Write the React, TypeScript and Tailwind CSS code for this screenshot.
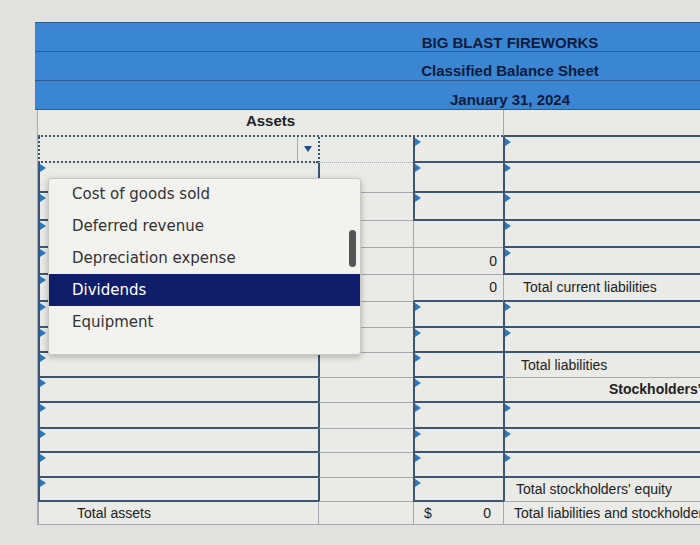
import React from "react";

type CellDef =
  | { t: "i" }
  | { t: "b" }
  | { t: "sel" }
  | { t: "txt"; text: string; cls: string }
  | { t: "zero" }
  | { t: "dollar" };

const I: CellDef = { t: "i" };
const B: CellDef = { t: "b" };
const SEL: CellDef = { t: "sel" };
const ZERO: CellDef = { t: "zero" };
const DOLLAR: CellDef = { t: "dollar" };
const txt = (text: string, cls: string): CellDef => ({ t: "txt", text, cls });

const COLW = ["w-[280px]", "w-[95px]", "w-[90px]", "w-[485px]"];

const ROWH = [
  "h-[26px]",
  "h-[30px]",
  "h-[28px]",
  "h-[27px]",
  "h-[27px]",
  "h-[27px]",
  "h-[26px]",
  "h-[25px]",
  "h-[25px]",
  "h-[25px]",
  "h-[26px]",
  "h-[24px]",
  "h-[25px]",
  "h-[24px]",
  "h-[23px]",
];

const rows: CellDef[][] = [
  [SEL, B, I, I],
  [I, B, I, I],
  [I, B, I, I],
  [I, B, B, I],
  [I, B, ZERO, I],
  [I, B, ZERO, txt("Total current liabilities", "pl-[19px]")],
  [I, B, I, I],
  [I, B, I, I],
  [I, B, I, txt("Total liabilities", "pl-[16px]")],
  [I, B, I, txt("Stockholders' equity", "pl-[104px] font-bold")],
  [I, B, I, I],
  [I, B, I, I],
  [I, B, I, I],
  [I, B, I, txt("Total stockholders' equity", "pl-[11px]")],
  [
    txt("Total assets", "pl-[38px]"),
    B,
    DOLLAR,
    txt("Total liabilities and stockholders' equity", "pl-[10px]"),
  ],
];

function Marker() {
  return (
    <span className="absolute left-0 top-[1px] w-0 h-0 border-y-[4px] border-y-transparent border-l-[6px] border-l-[#2b78c2]" />
  );
}

function Cell({ r, c }: { r: number; c: number }) {
  const cell = rows[r][c];
  const prev = c > 0 ? rows[r][c - 1] : null;
  const below = r + 1 < rows.length ? rows[r + 1][c] : null;
  const isIn = cell.t === "i";
  const isSel = cell.t === "sel";

  let left: string;
  if (isSel) left = "border-l-2 border-l-[#3a5674] border-dotted";
  else if (prev && prev.t === "sel") left = "border-l-2 border-l-[#3a5674] border-dotted";
  else if (isIn || (prev && prev.t === "i")) left = "border-l-2 border-l-[#3a5674]";
  else left = "border-l border-l-[#a4a9ad]";

  let bottom: string;
  if (isSel) bottom = "border-b-2 border-b-[#3a5674]";
  else if (isIn || (below && below.t === "i")) bottom = "border-b-2 border-b-[#3a5674]";
  else bottom = "border-b border-b-[#a4a9ad]";

  return (
    <div
      className={`${COLW[c]} ${left} ${bottom} relative h-full shrink-0 flex items-center overflow-hidden whitespace-nowrap`}
    >
      {isIn && <Marker />}
      {isSel && (
        <div className="flex w-full h-full justify-end">
          <div className="w-[21px] h-full border-l border-l-[#a4a9ad] flex items-center justify-center">
            <span className="w-0 h-0 border-x-[4px] border-x-transparent border-t-[6px] border-t-[#1d4d86]" />
          </div>
        </div>
      )}
      {cell.t === "txt" && <span className={cell.cls}>{cell.text}</span>}
      {cell.t === "zero" && <span className="ml-auto pr-[6px]">0</span>}
      {cell.t === "dollar" && (
        <div className="flex w-full justify-between pl-[10px] pr-[12px]">
          <span>$</span>
          <span>0</span>
        </div>
      )}
    </div>
  );
}

export default function App() {
  const items = [
    "Cost of goods sold",
    "Deferred revenue",
    "Depreciation expense",
    "Dividends",
    "Equipment",
  ];
  return (
    <div
      className="relative w-[700px] h-[545px] overflow-hidden bg-[#e2e2de] text-[#222]"
      style={{ fontFamily: '"Liberation Sans", Arial, sans-serif' }}
    >
      <div className="pt-[22px] pl-[35px]">
        <div className="w-[950px] text-[14px]">
          {/* header */}
          <div className="bg-[#3a86d3] border-t border-[#2a5c92] text-[#0d1b3e] font-bold text-[15px]">
            <div className="h-[29px] flex items-center justify-center pt-[12px] border-b border-[#2a5c92]">
              BIG BLAST FIREWORKS
            </div>
            <div className="h-[29px] flex items-center justify-center pt-[11px] border-b border-[#2a5c92]">
              Classified Balance Sheet
            </div>
            <div className="h-[29px] flex items-center justify-center pt-[10px] border-b border-[#2a5c92]">
              January 31, 2024
            </div>
          </div>
          <div className="bg-[#eaeae6] border-l border-l-[#a4a9ad] ml-[2px]">
            {/* Assets heading row */}
            <div className="h-[27px] flex">
              <div className="w-[465px] shrink-0 flex items-end justify-center pb-[3px] font-bold text-[15px] border-b-2 border-dotted border-b-[#3a5674]">
                Assets
              </div>
              <div className="w-[485px] shrink-0 border-l border-l-[#a4a9ad] border-b-2 border-b-[#3a5674]" />
            </div>
            {rows.map((row, r) => (
              <div key={r} className={`${ROWH[r]} flex`}>
                {row.map((_, c) => (
                  <Cell key={c} r={r} c={c} />
                ))}
              </div>
            ))}
          </div>
        </div>
      </div>

      {/* dropdown menu */}
      <div
        className="absolute left-[48px] top-[178px] w-[313px] h-[177px] bg-[#f2f2ef] border border-[#c9c9c5] rounded-[3px] shadow-[0_2px_6px_rgba(0,0,0,0.25)] text-[15px] text-[#333]"
        style={{ fontFamily: '"DejaVu Sans", Verdana, sans-serif' }}
      >
        <div className="-mt-[1px]">
          {items.map((it) => (
            <div
              key={it}
              className={`h-[32px] flex items-center pl-[23px] ${
                it === "Dividends" ? "bg-[#101d6b] text-white" : ""
              }`}
            >
              {it}
            </div>
          ))}
        </div>
        <div className="absolute right-[4px] top-[51px] w-[7px] h-[37px] rounded-full bg-[#555]" />
      </div>
    </div>
  );
}
